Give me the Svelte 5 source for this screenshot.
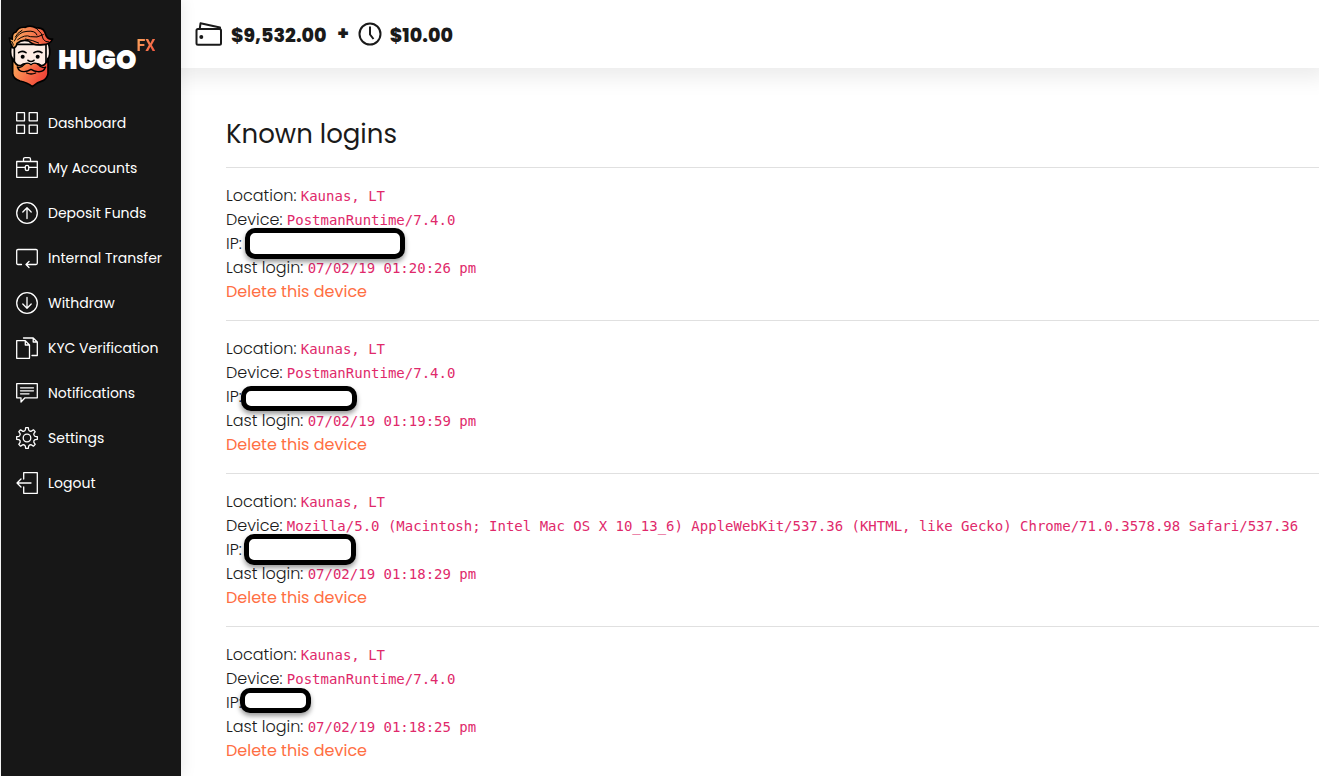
<script>
    const menu = [
        { label: 'Dashboard', icon: 'grid' },
        { label: 'My Accounts', icon: 'briefcase' },
        { label: 'Deposit Funds', icon: 'up' },
        { label: 'Internal Transfer', icon: 'transfer' },
        { label: 'Withdraw', icon: 'down' },
        { label: 'KYC Verification', icon: 'files' },
        { label: 'Notifications', icon: 'message' },
        { label: 'Settings', icon: 'gear' },
        { label: 'Logout', icon: 'logout' }
    ];

    const postman = 'PostmanRuntime/7.4.0';
    const chrome = 'Mozilla/5.0 (Macintosh; Intel Mac OS X 10_13_6) AppleWebKit/537.36 (KHTML, like Gecko) Chrome/71.0.3578.98 Safari/537.36';

    // mask: box drawn over the IP address, relative to its line
    let logins = $state([
        { id: 1, location: 'Kaunas, LT', device: postman, time: '07/02/19 01:20:26 pm', mask: { x: 19, y: -4, w: 160, h: 31 } },
        { id: 2, location: 'Kaunas, LT', device: postman, time: '07/02/19 01:19:59 pm', mask: { x: 15, y: 1, w: 116, h: 25 } },
        { id: 3, location: 'Kaunas, LT', device: chrome, time: '07/02/19 01:18:29 pm', mask: { x: 18, y: -4, w: 112, h: 31 } },
        { id: 4, location: 'Kaunas, LT', device: postman, time: '07/02/19 01:18:25 pm', mask: { x: 14, y: -3, w: 71, h: 25 } }
    ]);

    // outline of the settings cog: eight teeth round the centre
    const cog = Array.from({ length: 8 }, (_, i) => {
        const at = (r, deg) => {
            const a = ((i * 45 + deg) * Math.PI) / 180;
            return `${(11 + r * Math.sin(a)).toFixed(2)} ${(11 - r * Math.cos(a)).toFixed(2)}`;
        };
        return `${i ? 'L' : 'M'}${at(10.4, -7)}L${at(10.4, 7)}L${at(8.2, 12)}Q${at(6.8, 22.5)} ${at(8.2, 33)}`;
    }).join('') + 'Z';

    function remove(id) {
        logins = logins.filter((login) => login.id !== id);
    }
</script>

<div class="layout">
    <aside class="sidebar">
        <a class="logo" href="#home">
            <svg class="face" viewBox="24 15 138 192" aria-hidden="true">
                <defs>
                    <linearGradient id="hair" x1="0" y1="0" x2="1" y2="0">
                        <stop offset="0" stop-color="#fbb161" />
                        <stop offset="1" stop-color="#f04a3c" />
                    </linearGradient>
                    <linearGradient id="beard" x1="0" y1="0.2" x2="1" y2="0.6">
                        <stop offset="0" stop-color="#fba85a" />
                        <stop offset="0.5" stop-color="#f87048" />
                        <stop offset="1" stop-color="#ee4036" />
                    </linearGradient>
                </defs>
                <g stroke="#000" stroke-width="5" stroke-linejoin="round" stroke-linecap="round">
                    <path fill="#fdece4" d="M38 78Q29 86 33 110L38 122V150H143V122Q153 108 147 80L140 62H50Z" />
                    <path fill="#fdece4" d="M43 76H138V145H43Z" />
                    <path fill="url(#beard)" d="M38 118C44 133 54 141 62 140Q76 128 93 138Q110 128 124 140C134 141 140 131 144 118V164Q142 178 129 185Q113 189 97 203Q82 190 60 186Q40 180 38 164Z" />
                    <path fill="url(#hair)" d="M39 87Q30 72 28 57L37 61Q35 42 48 39Q55 23 76 25Q91 17 109 27Q132 24 137 47Q143 63 158 60Q151 76 128 77Q101 81 86 66Q66 60 51 73Q49 86 39 87Z" />
                    <path fill="none" stroke-width="3" d="M43 66Q55 38 81 37Q107 34 111 48M53 62Q76 45 91 53Q111 58 130 47M76 60Q98 63 116 72M66 34Q51 42 46 54M109 28Q128 42 130 61Q137 70 146 69M35 67Q39 72 40 78" />
                    <path fill="none" d="M56 101Q66 93 78 101M102 101Q113 93 126 101M84 124Q93 131 102 124" />
                    <path fill="url(#beard)" stroke-width="4" d="M52 144Q62 150 72 137Q83 128 93 137Q103 128 115 137Q125 150 137 144Q131 160 113 158Q103 157 93 151Q83 157 73 158Q57 159 52 144Z" />
                    <path fill="none" stroke-width="4" d="M80 162Q93 168 107 162" />
                </g>
                <circle cx="68" cy="113" r="6" />
                <circle cx="113" cy="113" r="6" />
            </svg>
            <span class="brand">HUGO</span>
            <span class="suffix">FX</span>
        </a>

        <nav>
            {#each menu as item}
                <a class="item" href="#{item.icon}">
                    <svg class="icon" viewBox="0 0 22 22" aria-hidden="true">
                        {#if item.icon === 'grid'}
                            <path d="M.7.7H8.500V8.800H.7ZM13.200.7H21.300V8.800H13.200ZM.7 13.200H8.500V21.300H.7ZM13.200 13.200H21.300V21.300H13.200Z" />
                        {:else if item.icon === 'briefcase'}
                            <path d="M.7 4.500H21.300V20.300H.7ZM7.500 4.500V2Q7.500.7 9 .7H13Q14.500.7 14.500 2V4.500M.7 10.300H9.300M12.700 10.300H21.300M9.300 9.500Q9.300 8.300 11 8.300T12.700 9.500V12.200Q12.700 13.500 11 13.500T9.300 12.200Z" />
                        {:else if item.icon === 'up'}
                            <circle cx="11" cy="11" r="10.300" />
                            <path d="M11 16.500V6M6.800 10L11 5.800 15.200 10" />
                        {:else if item.icon === 'transfer'}
                            <path d="M5.500 17.500H2Q.7 17.500.7 16V3.500Q.7 2.500 2 2.500H20Q21.300 2.500 21.300 3.500V16Q21.300 17.500 20 17.500H10M13 14.500L10 17.500 13 20.500" />
                        {:else if item.icon === 'down'}
                            <circle cx="11" cy="11" r="10.300" />
                            <path d="M11 5.500V16M6.800 12L11 16.200 15.200 12" />
                        {:else if item.icon === 'files'}
                            <path d="M.7 3.700H9.300L13.500 8V21.300H.7ZM9.300 3.700V8H13.500M7.500 1H17.200L21.300 5V18.500H16M17.200 1V5H21.300" />
                        {:else if item.icon === 'message'}
                            <path d="M.7 1.700H21.300V15.800H9L5 20V15.800H.7ZM4.500 5.800H17.500M4.500 8.800H17.500M4.500 11.800H13" />
                        {:else if item.icon === 'gear'}
                            <path d={cog} />
                            <circle cx="11" cy="11" r="3.800" />
                        {:else}
                            <path d="M7.700 7V.7H21.300V21.300H7.700V15M15 11H1M5 7L1 11 5 15" />
                        {/if}
                    </svg>
                    {item.label}
                </a>
            {/each}
        </nav>
    </aside>

    <div class="page">
        <header class="topbar">
            <svg class="wallet" viewBox="0 0 28 24" aria-hidden="true">
                <rect x="1.500" y="7" width="24.500" height="15.800" rx="1.500" />
                <path d="M4.800 6.500L5.500 1.300 25 5.500V7" />
                <circle cx="6.300" cy="15" r="1" fill="#1a1a1a" />
            </svg>
            <strong class="amount">$9,532.00</strong>
            <strong class="plus">+</strong>
            <svg class="clock" viewBox="0 0 24 24" aria-hidden="true">
                <circle cx="12" cy="12" r="10.500" />
                <path d="M12 4.500V12.500L15.500 17" />
            </svg>
            <strong class="amount">$10.00</strong>
        </header>

        <main>
            <h1>Known logins</h1>
            {#each logins as login (login.id)}
                <section class="login">
                    <div>Location: <code>{login.location}</code></div>
                    <div>Device: <code>{login.device}</code></div>
                    <div class="ip">
                        IP:
                        <span
                            class="mask"
                            style="left: {login.mask.x}px; top: {login.mask.y}px; width: {login.mask.w}px; height: {login.mask.h}px;"
                        ></span>
                    </div>
                    <div>Last login: <code>{login.time}</code></div>
                    <button class="delete" onclick={() => remove(login.id)}>Delete this device</button>
                </section>
            {/each}
        </main>
    </div>
</div>

<style>
    :global(body) {
        margin: 0;
        background: #fff;
    }

    .layout {
        display: flex;
        min-height: 100vh;
        box-sizing: border-box;
        padding-left: 1px;
        font-family: Poppins, Inter, 'Open Sans', sans-serif;
        font-size: 16px;
        line-height: 24px;
        color: #1a1a1a;
    }

    .sidebar {
        position: relative;
        flex: 0 0 180px;
        background: #171717;
        box-shadow: 0 0 15px rgba(0, 0, 0, 0.1);
    }

    .logo {
        display: flex;
        align-items: center;
        height: 76px;
        padding: 18px 0 6px 7px;
        color: #fff;
        text-decoration: none;
    }

    .face {
        width: 46px;
        height: 64px;
    }

    .brand {
        margin: 8px 0 0 4px;
        font-size: 26px;
        font-weight: 900;
        line-height: 32px;
    }

    .suffix {
        align-self: flex-start;
        margin-top: 16px;
        font-family: Roboto, sans-serif;
        font-size: 16px;
        font-weight: 700;
        line-height: 24px;
        color: transparent;
        background: linear-gradient(120deg, #fbb161, #f04a3c);
        background-clip: text;
    }

    .item {
        display: flex;
        align-items: center;
        gap: 10px;
        height: 45px;
        padding-left: 15px;
        font-size: 14px;
        color: #fff;
        text-decoration: none;
    }

    .icon {
        width: 22px;
        height: 22px;
        fill: none;
        stroke: #fff;
        stroke-width: 1.3;
        stroke-linejoin: round;
        stroke-linecap: round;
    }

    .page {
        flex: 1;
        min-width: 0;
    }

    .topbar {
        display: flex;
        align-items: center;
        box-sizing: border-box;
        height: 68px;
        padding-left: 14px;
        box-shadow: 0 2px 20px 8px rgba(0, 0, 0, 0.08);
    }

    .wallet,
    .clock {
        fill: none;
        stroke: #1a1a1a;
        stroke-width: 2;
        stroke-linejoin: round;
    }

    .wallet {
        width: 28px;
        height: 24px;
    }

    .clock {
        width: 24px;
        height: 24px;
    }

    .amount {
        margin: 4px 0 0 8px;
        font-size: 19px;
        font-weight: 800;
    }

    .plus {
        margin-left: 11px;
        margin-right: 9px;
        font-size: 19px;
        font-weight: 800;
    }

    main {
        padding: 49px 0 13px 45px;
    }

    h1 {
        margin: 0 0 16px;
        font-size: 26px;
        font-weight: 400;
        line-height: 34px;
    }

    .login {
        padding: 16px 0;
        border-top: 1px solid #e0e0e0;
        font-weight: 300;
    }

    .login:last-child {
        padding-bottom: 0;
    }

    code {
        font-family: 'DejaVu Sans Mono', monospace;
        font-size: 14px;
        font-weight: 400;
        line-height: 16px;
        color: #e0296b;
    }

    .ip {
        position: relative;
    }

    .mask {
        position: absolute;
        box-sizing: border-box;
        border: 5px solid #000;
        border-radius: 10px;
        background: #fff;
        box-shadow: 0 3px 5px rgba(0, 0, 0, 0.4);
    }

    .delete {
        display: block;
        padding: 0;
        border: 0;
        background: none;
        font: inherit;
        font-weight: 400;
        color: #ff6f43;
        cursor: pointer;
    }
</style>
